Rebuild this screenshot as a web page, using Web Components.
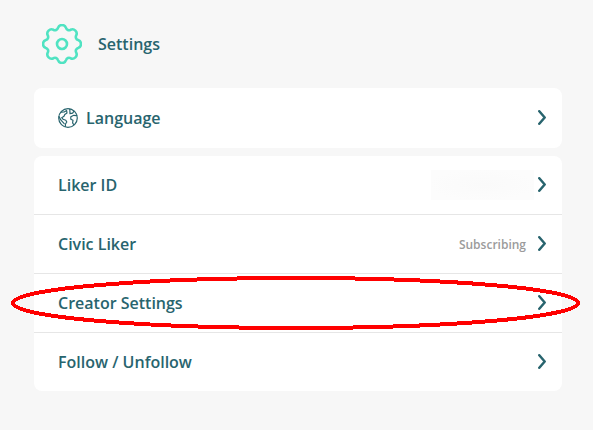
<!DOCTYPE html>
<html lang="en"><head><meta charset="utf-8"><title>Settings</title>
<style>
body{margin:0;background:#f7f7f7;color:#28646e;font:600 16px/24px "Open Sans","Noto Sans",sans-serif}
</style></head><body>
<settings-page></settings-page>
<script>
function define(name, html, setup){
  const t=document.createElement('template');t.innerHTML=html;
  customElements.define(name,class extends HTMLElement{
    constructor(){super();this.attachShadow({mode:'open'}).append(t.content.cloneNode(true));if(setup)setup(this.shadowRoot);}
  });
}
define('gear-icon',`<style>:host{display:block;width:40px;height:40px}svg{display:block}</style>
<svg width="40" height="40" viewBox="-20 -20 40 40" fill="none" stroke="#50e3c2" stroke-width="2.6" stroke-linejoin="round"><path/><circle r="5"/></svg>`,root=>{
  // Eight rounded teeth joined by shallow concave arcs.
  const p=d=>{const a=d*Math.PI/180;return (16.6*Math.cos(a)).toFixed(2)+' '+(16.6*Math.sin(a)).toFixed(2)};
  let d='M'+p(-14);
  for(let a=0;a<360;a+=45)d+='A4.25 4.25 0 0 1 '+p(a+14)+'A3.1 3.1 0 0 0 '+p(a+31);
  root.querySelector('path').setAttribute('d',d+'Z');
});
define('globe-icon',`<style>:host{display:block;width:20px;height:20px}svg{display:block}</style>
<svg width="20" height="20" viewBox="0 0 20 20" fill="none" stroke="#28646e" stroke-width="1.2" stroke-linejoin="round" stroke-linecap="round"><circle cx="10" cy="10" r="9.3"/><path d="M3.2 4.2L6.2 4 8.6 2.6 9 5 6.8 6.5 6 8.3 3.7 9.7 5 11.2 7.8 12.2 8.8 14 7.5 16 7.3 18.5M1 8.6L3 12.2 6.2 15.6M11.8 1L12 5.7 14.6 5.2 16 3.2M18.8 7.7L15.8 7.3 12.8 8.8 12.8 11.2 15 12.2 14.6 15 15.8 16.6"/></svg>`);
define('chevron-icon',`<style>:host{display:block;width:8px;height:15px}svg{display:block}</style>
<svg width="8" height="15" viewBox="0 0 8 15" fill="none" stroke="#28646e" stroke-width="2.5" stroke-linecap="round" stroke-linejoin="round"><path d="M1.3 1.3L6.7 7.5 1.3 13.7"/></svg>`);
define('settings-header',`<style>:host{display:flex;align-items:center;gap:16px;height:40px;padding:24px 0 24px 42px}</style><gear-icon></gear-icon><span><slot></slot></span>`);
define('settings-card',`<style>:host{display:block;background:#fff;border-radius:8px;overflow:hidden;margin:0 31px 8px 34px}</style><slot></slot>`);
define('settings-row',`<style>:host{display:flex;align-items:center;box-sizing:border-box;height:var(--row-height,59px);padding:0 16px 0 24px;border-bottom:var(--divider,1px solid #e6e6e6)}
.label{display:flex;align-items:center;gap:8px;flex:1}chevron-icon{margin:0 0 1px 11px}</style>
<div class="label"><slot name="icon"></slot><span><slot></slot></span></div><slot name="value"></slot><chevron-icon></chevron-icon>`);
define('row-status',`<style>:host{display:block;font-size:12px;color:#9b9b9b;margin:1px 1px 0 0}</style><slot></slot>`);
define('hidden-value',`<style>:host{display:block;width:103px;height:30px;margin-right:-7px;background:radial-gradient(ellipse,#fafafa,#fcfcfc 75%)}</style>`);
define('ellipse-mark',`<style>:host{position:absolute;left:10px;top:274px;pointer-events:none}svg{display:block}</style>
<svg width="572" height="58" fill="none" stroke="#f00" stroke-width="4" shape-rendering="crispEdges"><ellipse cx="285.5" cy="29" rx="282.5" ry="25"/></svg>`);
define('settings-page',`<style>:host{display:block;position:relative;height:430px;overflow:hidden}
.single{--row-height:60px;--divider:0}.last{--row-height:58px;--divider:0}</style>
<settings-header>Settings</settings-header>
<settings-card><settings-row class="single"><globe-icon slot="icon"></globe-icon>Language</settings-row></settings-card>
<settings-card><settings-row>Liker ID<hidden-value slot="value"></hidden-value></settings-row>
<settings-row>Civic Liker<row-status slot="value">Subscribing</row-status></settings-row>
<settings-row>Creator Settings</settings-row>
<settings-row class="last">Follow / Unfollow</settings-row></settings-card>
<ellipse-mark></ellipse-mark>`);
</script></body></html>
